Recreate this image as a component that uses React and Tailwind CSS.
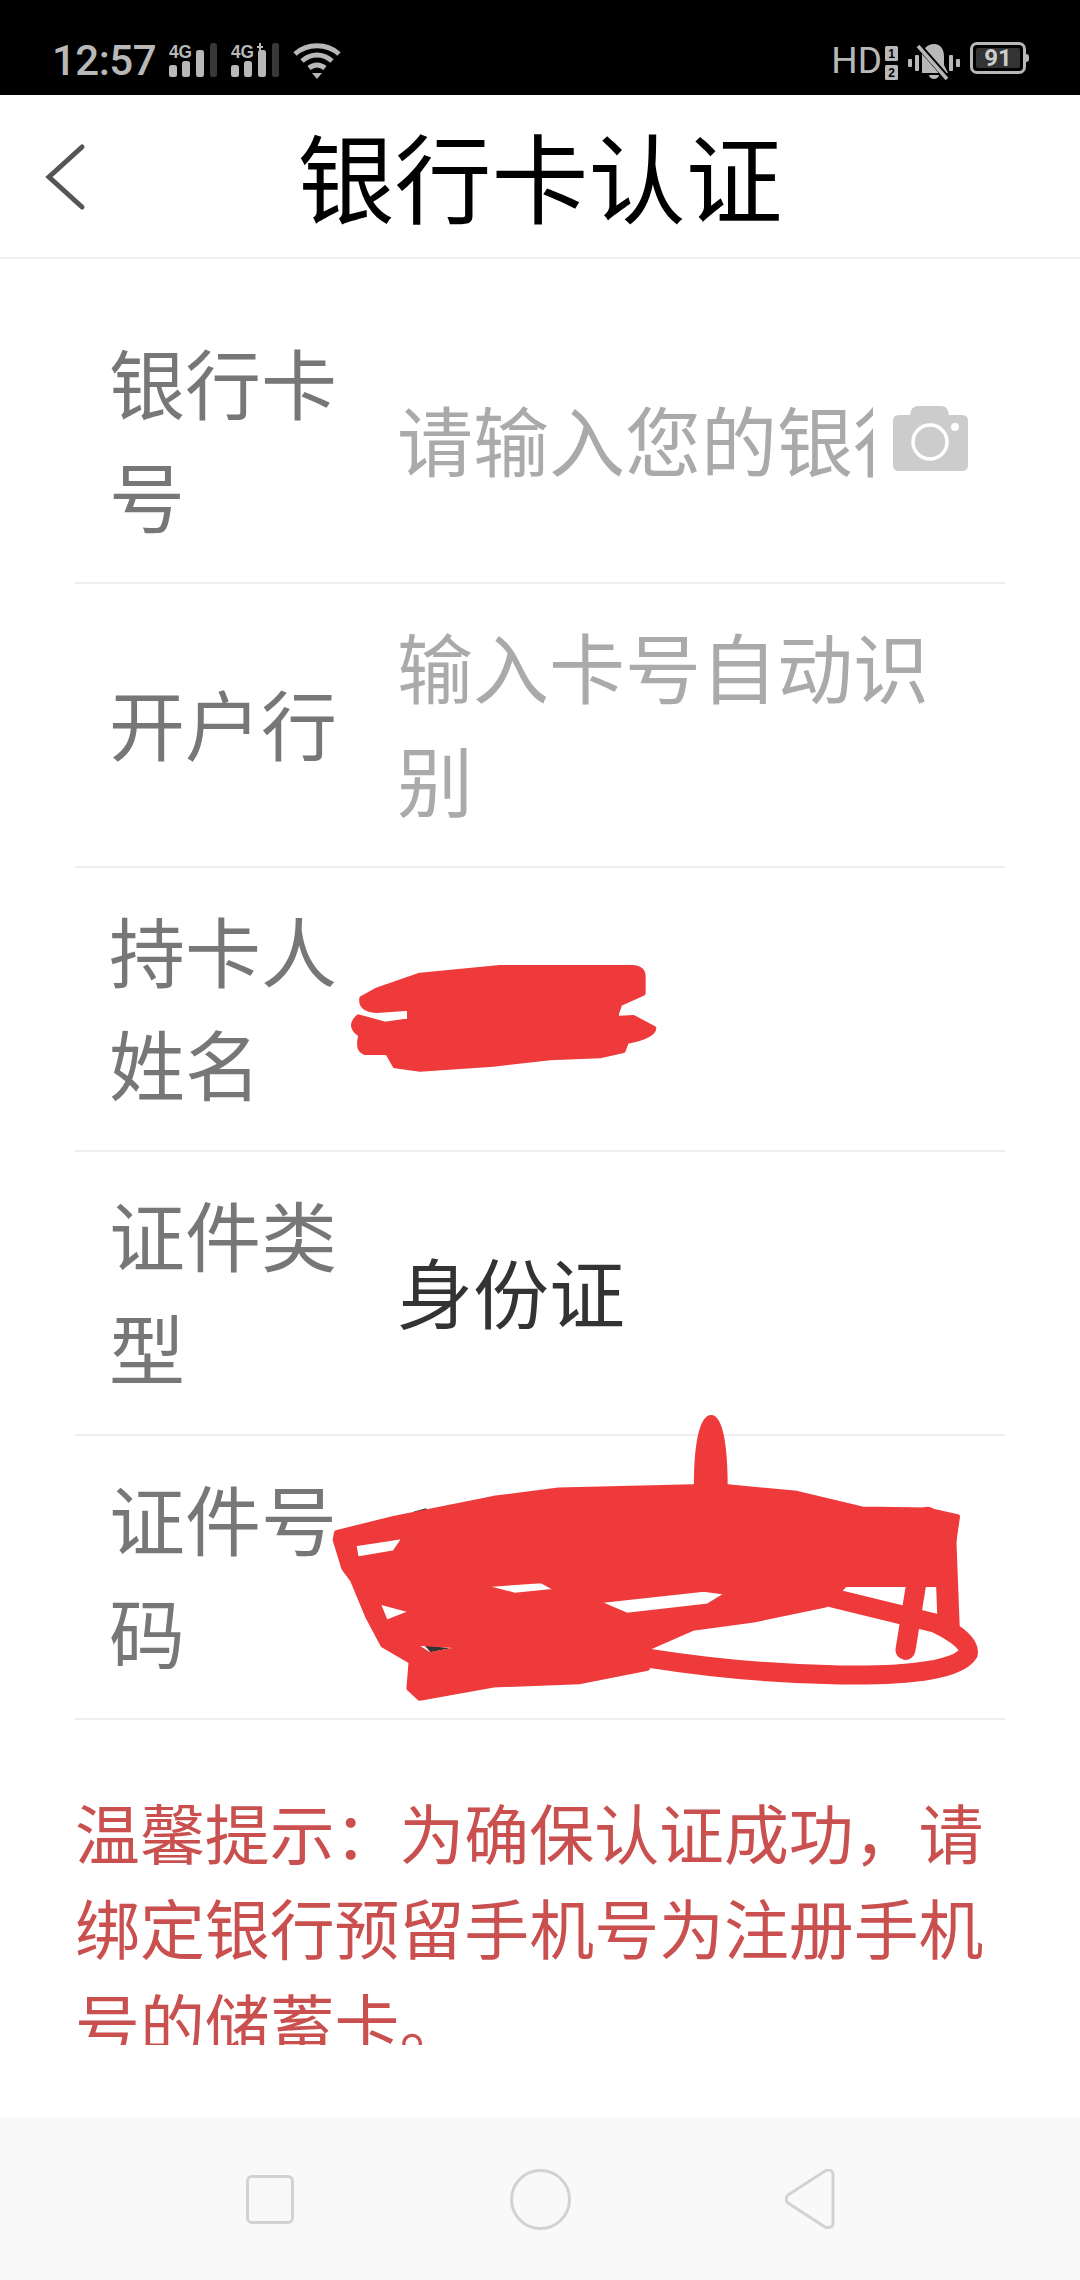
const cjk = { fontFamily: '"Noto Sans CJK SC", "Noto Sans", sans-serif' };

function Signal({ plus }) {
  return (
    <svg width="48" height="35" viewBox="0 0 48 35" fill="#b8b8b8">
      <text x="0" y="15" fontFamily="Liberation Sans, sans-serif" fontWeight="700" fontSize="18" textLength="23" lengthAdjust="spacingAndGlyphs">4G</text>
      {plus && <path d="M26 3h2V0h2v3h2v2h-2v3h-2V5h-2z" />}
      <rect x="0" y="22" width="8" height="12" rx="2.5" />
      <rect x="13" y="18" width="8" height="16" rx="2.5" />
      <rect x="27" y="7" width="8" height="27" rx="2.5" />
      <rect x="41" y="0" width="7" height="34" rx="2.5" fill="#383838" />
    </svg>
  );
}

function StatusBar() {
  return (
    <div className="flex h-[95px] items-start justify-between bg-black pl-[52px] pr-[51px] pt-[42px] text-[#b8b8b8]">
      <div className="flex items-start">
        <span className="mt-[-3px] w-[101px] text-[42px] font-medium leading-[44px] tracking-[-0.5px]" style={{ fontFamily: 'Roboto, sans-serif' }}>12:57</span>
        <span className="ml-[16px] mt-[1px]"><Signal /></span>
        <span className="ml-[14px] mt-[1px]"><Signal plus /></span>
        <svg className="ml-[14px]" width="48" height="38" viewBox="0 0 48 38" fill="none" stroke="#b8b8b8" strokeWidth="5">
          <path d="M2 12 C14 1 34 1 46 12" />
          <path d="M9 19 C18 11 30 11 39 19" />
          <path d="M16 26 C21 22 27 22 32 26" />
          <path d="M19 31 L29 31 L24 37 Z" fill="#b8b8b8" stroke="none" />
        </svg>
      </div>
      <div className="flex items-start">
        <span className="mt-[1px] text-[37px] leading-[36px]" style={{ fontFamily: 'Roboto, sans-serif' }}>HD</span>
        <svg className="ml-[3px] mt-[4px]" width="13" height="34" viewBox="0 0 13 34">
          <rect width="13" height="15" rx="1.5" fill="#b8b8b8" />
          <rect y="19" width="13" height="15" rx="1.5" fill="#b8b8b8" />
          <text x="6.5" y="12" textAnchor="middle" fontSize="12" fontWeight="700" fill="#000" fontFamily="Liberation Sans, sans-serif">1</text>
          <text x="6.5" y="31" textAnchor="middle" fontSize="12" fontWeight="700" fill="#000" fontFamily="Liberation Sans, sans-serif">2</text>
        </svg>
        <svg className="ml-[10px] mt-[1px]" width="52" height="38" viewBox="0 0 52 38" fill="#b8b8b8">
          <rect x="0" y="16" width="4" height="8" rx="1" />
          <rect x="7" y="12" width="4" height="16" rx="1" />
          <rect x="41" y="12" width="4" height="16" rx="1" />
          <rect x="48" y="16" width="4" height="8" rx="1" />
          <path d="M26 1 C33 1 36 7 36 13 L36 22 L40 30 L14 30 L14 12 C15 6 19 1 26 1 Z" />
          <path d="M21 32 h10 a5 4 0 0 1 -10 0 Z" />
          <path d="M11 3 L40 36" stroke="#000" strokeWidth="6" />
          <path d="M10 3 L39 36" stroke="#b8b8b8" strokeWidth="3.5" />
        </svg>
        <div className="ml-[10px] flex items-center">
          <div className="flex h-[32px] w-[56px] items-center justify-center rounded-[7px] border-[3px] border-[#b8b8b8] p-[3px]">
            <span className="flex h-full w-full items-center justify-center rounded-[2px] bg-[#333] text-[24px] font-bold leading-none text-[#ccc]" style={{ fontFamily: 'Roboto, sans-serif' }}>91</span>
          </div>
          <span className="h-[8px] w-[3px] rounded-r-full bg-[#b8b8b8]" />
        </div>
      </div>
    </div>
  );
}

function Row({ label, children }) {
  return (
    <div className="flex h-[284px] items-center border-b-[2px] border-[#eeeeee] pb-[6px] pl-[34px]">
      <div className="w-[288px] shrink-0 pr-[30px] text-[76px] leading-[113px] text-[#777777]">{label}</div>
      {children}
    </div>
  );
}

function Scribbles() {
  return (
    <>
      <svg className="absolute left-[300px] top-[880px]" width="400" height="220" viewBox="0 0 1200 660" fill="none">
        <path d="M950 385l8 0-2 22-8 0z" fill="#333" />
        <path
          d="M185 355 L230 330 L360 285 L600 262 L1000 262 Q1030 265 1030 290 L1030 340 L960 372 L945 415 L1000 412 L1062 445 Q1060 470 980 485 L970 512 L900 528 L750 534 L580 553 L360 568 L285 558 L262 518 L195 518 Q170 510 182 465 Q142 440 175 410 L255 432 L328 422 L328 385 L230 392 Q180 390 185 355 Z"
          fill="#ee3a3a"
          stroke="#ee3a3a"
          strokeWidth="14"
          strokeLinejoin="round"
        />
      </svg>
      <svg className="absolute left-[320px] top-[1400px]" width="680" height="320" viewBox="0 0 1568 960" preserveAspectRatio="none" fill="none">
        <path d="M215 335 L245 325 L250 345 Z M1300 325 L1330 325 L1330 340 Z M190 415 L200 415 L190 435 Z M240 735 L300 745 L255 757 Z M640 605 L655 600 L650 620 Z M1405 465 L1412 500 L1400 500 Z" fill="#333" />
        <path d="M862 260 C862 130 875 45 902 45 C928 45 940 130 940 260 Z" fill="#ee3a3a" />
        <path
          fillRule="evenodd"
          fill="#ee3a3a"
          stroke="#ee3a3a"
          strokeWidth="5"
          strokeLinejoin="round"
          vectorEffect="non-scaling-stroke"
          d="M38 398 L170 355 L400 295 L550 270 L860 260 L940 260 L1100 280 L1250 327 L1400 330 L1470 350 L1460 440 L1415 500 L1350 500 L1210 555 L1165 615 L1000 660 L860 685 L755 745 L755 805 L600 845 L400 855 L230 895 L205 865 L210 785 L145 735 L110 650 L75 540 L55 505 L35 420 Z
             M78 432 L198 408 L172 458 L84 478 Z
             M362 556 L510 542 L552 572 L450 586 Z
             M632 604 L885 568 L945 578 L895 618 L708 646 Z
             M132 604 L218 634 L152 668 Z
             M208 728 L352 740 L252 764 Z"
        />
        <path d="M1170 590 L1420 670 Q1500 720 1495 760 Q1460 830 1200 825 Q980 820 760 775" stroke="#ee3a3a" strokeWidth="19" vectorEffect="non-scaling-stroke" strokeLinecap="round" />
        <path d="M1440 350 L1450 690" stroke="#ee3a3a" strokeWidth="22" vectorEffect="non-scaling-stroke" />
        <path d="M1400 350 L1350 750" stroke="#ee3a3a" strokeWidth="20" vectorEffect="non-scaling-stroke" strokeLinecap="round" />
        <path d="M1200 531 L1440 531" stroke="#ee3a3a" strokeWidth="20" vectorEffect="non-scaling-stroke" />
      </svg>
    </>
  );
}

export default function App() {
  return (
    <div className="relative flex h-[2280px] w-[1080px] flex-col overflow-hidden bg-white" style={cjk}>
      <StatusBar />

      <div className="relative flex h-[164px] shrink-0 items-center justify-center border-b-[2px] border-[#eeeeee] pb-[6px]">
        <svg className="absolute left-[44px] top-[48px]" width="42" height="68" viewBox="0 0 42 68" fill="none" stroke="#555" strokeWidth="5" strokeLinecap="round">
          <path d="M38 4 L5 34 L38 64" />
        </svg>
        <span className="text-[97px] leading-none text-black">银行卡认证</span>
      </div>

      <div className="mx-[75px] mt-[41px]">
        <Row label="银行卡号">
          <div className="w-[476px] overflow-hidden whitespace-nowrap text-[76px] leading-[113px] text-[#aaaaaa]">请输入您的银行卡号</div>
          <svg className="ml-[20px] shrink-0" width="75" height="65" viewBox="0 0 75 65">
            <path d="M6 9 L17 9 Q18 0 25 0 L48 0 Q55 0 56 9 L69 9 Q75 9 75 15 L75 59 Q75 65 69 65 L6 65 Q0 65 0 59 L0 15 Q0 9 6 9 Z" fill="#cccccc" />
            <circle cx="37" cy="36" r="17" fill="none" stroke="#fff" strokeWidth="3.5" />
            <circle cx="62" cy="21" r="4" fill="#fff" />
          </svg>
        </Row>
        <Row label="开户行">
          <div className="w-[540px] text-[76px] leading-[113px] text-[#aaaaaa]">输入卡号自动识别</div>
        </Row>
        <Row label="持卡人姓名" />
        <Row label="证件类型">
          <div className="text-[76px] leading-[113px] text-[#333333]">身份证</div>
        </Row>
        <Row label="证件号码" />
      </div>

      <div className="ml-[75px] mr-[30px] mt-[64px] h-[261px] overflow-hidden text-[64.9px] leading-[95px] text-[#c9504f]">
        <p className="w-[915px]">温馨提示：为确保认证成功，请绑定银行预留手机号为注册手机号的储蓄卡。</p>
      </div>

      <div className="mt-auto grid h-[162px] shrink-0 grid-cols-3 items-center justify-items-center bg-[#f9f9f9] px-[135px]">
        <div className="h-[49px] w-[48px] rounded-[6px] border-[3px] border-[#d2d2d2]" />
        <div className="h-[61px] w-[61px] rounded-full border-[3px] border-[#d2d2d2]" />
        <svg width="50" height="60" viewBox="0 0 50 60" fill="none" stroke="#d2d2d2" strokeWidth="3" strokeLinejoin="round">
          <path d="M3 26 L40 2 Q48 -1 48 6 L48 54 Q48 60 40 58 L3 34 Q-1 30 3 26 Z" />
        </svg>
      </div>

      <Scribbles />
    </div>
  );
}
